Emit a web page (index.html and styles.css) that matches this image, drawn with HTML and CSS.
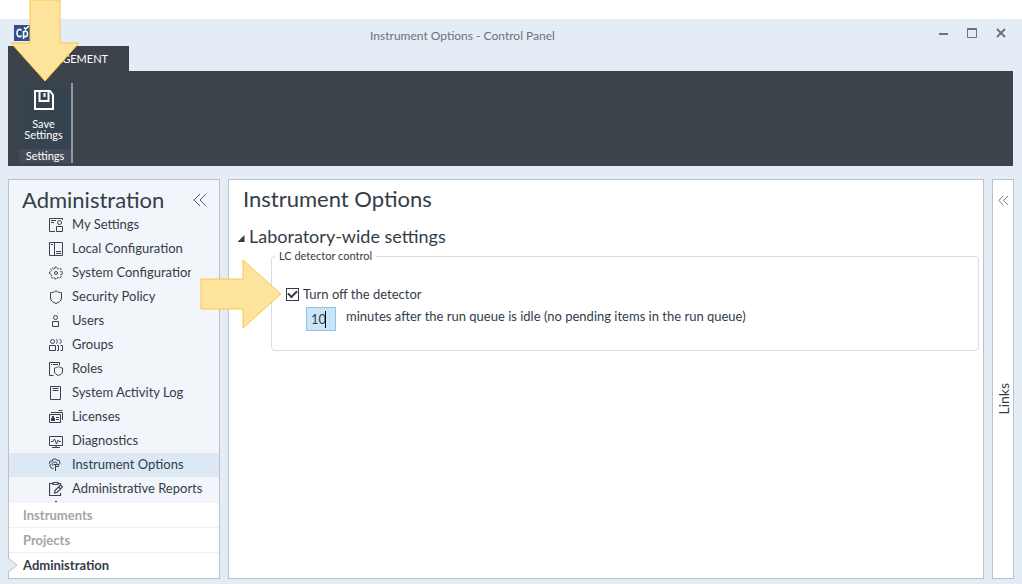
FILE: index.html
```html
<!DOCTYPE html>
<html lang="en">
<head>
  <meta charset="UTF-8" />
  <meta name="viewport" content="width=device-width, initial-scale=1.0" />
  <title>Instrument Options - Control Panel</title>
  <link rel="stylesheet" href="styles.css">
</head>
<body>

  <div class="window">

    <!-- TITLE BAR -->
    <header class="titlebar">
      <svg class="logo" viewBox="0 0 17 16" aria-hidden="true">
        <rect width="17" height="16" fill="#2f4f86"/>
        <path d="M7.500 5.500C6 3.500 3 4 3 8s3 4.500 4.500 2.500M9.500 14V6M9.500 7c3-2 4 0 4 2s-1 3.500-4 2M10 2.500l1.500 1.500L15 1" fill="none" stroke="#fff" stroke-width="1.600"/>
      </svg>
      <h1>Instrument Options - Control Panel</h1>
      <div class="window-buttons">
        <button type="button" aria-label="Minimize">
          <svg viewBox="0 0 12 12"><path d="M2 7h9" stroke-width="2"/></svg>
        </button>
        <button type="button" aria-label="Maximize">
          <svg viewBox="0 0 12 12"><path d="M1.500 1.500h9v9h-9zM1 2.500h10"/></svg>
        </button>
        <button type="button" aria-label="Close">
          <svg viewBox="0 0 12 12"><path d="M2 2l8 8M10 2l-8 8" stroke-width="2"/></svg>
        </button>
      </div>
    </header>

    <!-- RIBBON -->
    <button type="button" class="ribbon-tab">MANAGEMENT</button>
    <div class="ribbon">
      <div class="ribbon-group">
        <button type="button" class="save-btn">
          <svg viewBox="0 0 22 22" aria-hidden="true">
            <path d="M2 2h15l3 4v14H2zM6.500 2v10h9V2M11.500 4v4" fill="none" stroke="#fff" stroke-width="2"/>
          </svg>
          <span>Save<br>Settings</span>
        </button>
        <div class="group-name">Settings</div>
      </div>
    </div>

    <!-- WORKSPACE -->
    <div class="workspace">
      <aside class="sidebar">
        <div class="sidebar-head">
          <h2>Administration</h2>
          <button type="button" class="collapse" aria-label="Collapse">
            <svg viewBox="0 0 14 14"><path d="M7 1L1 7l6 6M13 1L7 7l6 6"/></svg>
          </button>
        </div>

        <nav class="menu">
          <a href="#">
            <svg viewBox="0 0 14 14"><path d="M6 13.500H.5V.5h13V2M2 2.500h5M2 4.500h3M7.500 8.500h6v5h-6z"/><circle cx="10.500" cy="4.500" r="2"/></svg>
            My Settings
          </a>
          <a href="#">
            <svg viewBox="0 0 14 14"><path d="M.5.5h13v13H.5zM5.500.5v13M2 2.500h2M7 9.500h5M7 11.500h5"/></svg>
            Local Configuration
          </a>
          <a href="#">
            <svg viewBox="0 0 14 14"><path d="M5.700 2.500L6 1h2l.3 1.500 1 .5 1.500-1L12.300 3.300l-.8 1.500.4 1L13.500 6v2l-1.600.3-.4 1 .8 1.500-1.500 1.500-1.500-1-1 .4L8 13H6l-.3-1.300-1-.4-1.500 1-1.500-1.500.8-1.500-.4-1L.5 8V6l1.600-.3.4-1L1.700 3.300 3.200 2l1.500 1z" stroke-dasharray="3 1"/><circle cx="7" cy="7" r="1.500"/></svg>
            <span class="clipped">System Configuration</span>
          </a>
          <a href="#">
            <svg viewBox="0 0 14 14"><path d="M7 .7C5 2.500 3 2.500 1.500 2.500V8c0 3 3 4.500 5.500 5.500 2.500-1 5.500-2.500 5.500-5.500V2.500C11 2.500 9 2.500 7 .7z"/></svg>
            Security Policy
          </a>
          <a href="#">
            <svg viewBox="0 0 14 14"><circle cx="6.500" cy="3.500" r="2"/><path d="M3.500 7.500h6v5h-6z"/></svg>
            Users
          </a>
          <a href="#">
            <svg viewBox="0 0 14 14"><circle cx="3.500" cy="3.500" r="2"/><path d="M.5 7.500h6v5h-6zM7 1.500c2 .5 2 3.500 0 4M10.500 1.500c2.500.5 2.500 3.500 0 4M8 7.500h1.500v5H8M11.500 7.500h2v5h-2"/></svg>
            Groups
          </a>
          <a href="#">
            <svg viewBox="0 0 14 14"><path d="M4.500 13.500h-4V.5h10v3M2 2.500h1M4 2.500h5M9.500 4.500c-1.500 1.500-3 1-4 1.500v4c.5 2 2 2.700 4 3.500 2-.8 3.500-1.500 4-3.500V6c-1-.5-2.500 0-4-1.500z"/></svg>
            Roles
          </a>
          <a href="#">
            <svg viewBox="0 0 14 14"><path d="M1.500.5h10v13h-10zM3.500 2.500h6M3.500 4.500h6"/></svg>
            System Activity Log
          </a>
          <a href="#">
            <svg viewBox="0 0 14 14"><path d="M.5 4.500h11v8H.5zM2 2.500h11.500V10M9.500.5h4M7 7.500h3M7 9.500h3"/><path d="M3 6h2v2h1v3H2V8h1z" fill="#3c424a" stroke="none"/></svg>
            Licenses
          </a>
          <a href="#">
            <svg viewBox="0 0 14 14"><path d="M.5 2.500h13v9H.5zM2 7.500h2L5.500 5l2 5L9 6l1 1.500h2M7 11v2M3 13.500h8"/></svg>
            Diagnostics
          </a>
          <a href="#" class="active">
            <svg viewBox="0 0 14 14"><path d="M4.500 10.500L2 10 .8 8l.9-1.500L0 5.500 1.300 3l1.900.3L4 1h3l1 1.500 2-.3L11 5l-.5 1.500M4 8C2.500 6.500 3 4 5.500 4S8 5.500 8 6M6.500 6.500V13M4.500 6.500h5v2h-3"/></svg>
            Instrument Options
          </a>
          <a href="#">
            <svg viewBox="0 0 14 14"><path d="M4 1.500H.5v12h11V11M9.500 1.500h2V3M4 .5h5v2H4zM5.500 11l.5-2.500 5.500-5.500 2 2L8 10.500zM9.500 5l2 2" stroke-width="1.200"/></svg>
            Administrative Reports
          </a>
        </nav>

        <nav class="sections">
          <a href="#">Instruments</a>
          <a href="#">Projects</a>
          <a href="#" class="current">Administration
            <svg class="notch" viewBox="0 0 10 16" aria-hidden="true"><path d="M0 1l9 7-9 7" fill="#e4ecf4" stroke="#bcc1c8"/></svg>
          </a>
        </nav>
      </aside>

      <main class="content">
        <h2>Instrument Options</h2>
        <h3>
          <svg viewBox="0 0 8 8" aria-hidden="true"><path d="M7.500 1v7H.5z" fill="#333b45"/></svg>
          Laboratory-wide settings
        </h3>
        <fieldset>
          <legend>LC detector control</legend>
          <label class="check-row">
            <input type="checkbox" checked>
            Turn off the detector
          </label>
          <div class="minutes-row">
            <div class="minutes-box">
              <input type="text" id="minutes" value="10">
              <span class="caret"></span>
            </div>
            <label for="minutes">minutes after the run queue is idle (no pending items in the run queue)</label>
          </div>
        </fieldset>
      </main>

      <aside class="links">
        <button type="button" class="collapse" aria-label="Expand links">
          <svg viewBox="0 0 14 14"><path d="M7 1L1 7l6 6M13 1L7 7l6 6"/></svg>
        </button>
        <span>Links</span>
      </aside>
    </div>
  </div>

  <!-- Callout arrows over the window -->
  <svg class="arrow arrow-save" viewBox="0 0 70 83" aria-hidden="true">
    <path d="M20 0h30v43h19L35 81 1 43h19z"/>
  </svg>
  <svg class="arrow arrow-check" viewBox="0 0 83 70" aria-hidden="true">
    <path d="M1 20h42V1l38 34-38 34V50H1z"/>
  </svg>

</body>
</html>
```
FILE: styles.css
```css
* {
  box-sizing: border-box;
  margin: 0;
  padding: 0;
}

body {
  position: relative;
  min-height: 100vh;
  padding-top: 19px;
  display: flex;
  flex-direction: column;
  font-family: Lato, "Liberation Sans", sans-serif;
  font-size: 13px;
  color: #333d49;
  background: #fff;
}

button {
  border: none;
  background: none;
  font: inherit;
  color: inherit;
  cursor: pointer;
}

a {
  color: inherit;
  text-decoration: none;
}

h1, h2, h3 {
  font-weight: 400;
}

.window {
  flex: 1;
  display: flex;
  flex-direction: column;
  padding: 0 8px 5px;
  background: #e4edf5;
}

/* Title bar */
.titlebar {
  display: grid;
  grid-template-columns: 1fr auto 1fr;
  align-items: center;
  height: 27px;
  padding: 0 7px 0 6px;
}

.logo {
  width: 17px;
  height: 16px;
}

.titlebar h1 {
  padding-top: 6px;
  margin-right: 96px;
  font-size: 12px;
  color: #6a737c;
}

.window-buttons {
  display: flex;
  justify-content: flex-end;
  gap: 17px;
}

.window-buttons button,
.window-buttons svg {
  display: block;
  width: 12px;
  height: 12px;
}

.window-buttons svg {
  fill: none;
  stroke: #6f7276;
}

/* Ribbon */
.ribbon-tab {
  align-self: flex-start;
  width: 121px;
  height: 25px;
  font-size: 11px;
  color: #fff;
  background: #3d434b;
}

.ribbon {
  display: flex;
  height: 95px;
  margin-right: 1px;
  padding: 12px 11px 3px;
  background: #3d434b;
}

.ribbon-group {
  display: flex;
  flex-direction: column;
  justify-content: space-between;
  width: 54px;
  border-right: 2px solid #8e9aa7;
  font-size: 11px;
  color: #fff;
  background: #37434e;
}

.save-btn {
  padding: 6px 3px 0 0;
  line-height: 11px;
}

.save-btn svg {
  display: block;
  width: 22px;
  height: 22px;
  margin: 0 auto 7px;
}

.group-name {
  line-height: 14px;
  text-align: center;
  background: #434d5a;
}

/* Workspace */
.workspace {
  flex: 1;
  display: flex;
  gap: 8px;
  margin-top: 13px;
}

.sidebar,
.content,
.links {
  border: 1px solid #bcc1c8;
  background: #fff;
}

.sidebar {
  display: flex;
  flex-direction: column;
  width: 212px;
  background: #f2f5fa;
}

.sidebar-head {
  display: flex;
  justify-content: space-between;
  align-items: center;
  height: 33px;
  padding: 6px 12px 0 13px;
}

h2 {
  font-size: 22px;
  line-height: 27px;
}

.collapse svg {
  display: block;
  width: 14px;
  height: 14px;
  fill: none;
  stroke: #4d5663;
}

.menu {
  flex: 1;
}

.menu a {
  display: flex;
  align-items: center;
  gap: 9px;
  height: 24px;
  padding: 0 0 2px 40px;
  white-space: nowrap;
}

.menu svg {
  width: 14px;
  height: 14px;
  margin-top: 2px;
  fill: none;
  stroke: #3c424a;
}

.menu .active {
  background: #dce9f5;
}

.clipped {
  width: 119px;
  overflow: hidden;
}

/* tip of the next icon, scrolled under the sections */
.menu::after {
  content: "";
  display: block;
  width: 2px;
  height: 1px;
  margin-left: 46px;
  background: #3c424a;
}

.sections a {
  position: relative;
  display: block;
  height: 25px;
  padding-left: 14px;
  border-bottom: 1px solid #eceff3;
  line-height: 24px;
  font-weight: 700;
  color: #a3a5a9;
  background: #fff;
}

.sections .current {
  border-bottom: none;
  color: #333d49;
}

.notch {
  position: absolute;
  left: -1px;
  top: 4px;
  width: 10px;
  height: 16px;
}

/* Content */
.content {
  flex: 1;
  padding: 5px 4px 0 8px;
}

.content h2 {
  padding-left: 6px;
}

.content h3 {
  display: flex;
  align-items: center;
  gap: 4px;
  margin-top: 11px;
  font-size: 18px;
  line-height: 26px;
}

.content h3 svg {
  width: 8px;
  height: 8px;
  margin-top: 3px;
}

fieldset {
  height: 102px;
  margin-left: 34px;
  padding: 22px 14px 0;
  border: 1px solid #d3dde6;
  border-radius: 4px;
}

legend {
  margin-left: -11px;
  padding: 0 4px;
  font-size: 11px;
  line-height: 14px;
}

.check-row {
  display: flex;
  align-items: center;
  gap: 4px;
  line-height: 18px;
}

.check-row input {
  appearance: none;
  display: grid;
  place-items: center;
  width: 13px;
  height: 13px;
  border: 1px solid #333b45;
  background: #fff;
}

.check-row input:checked::before {
  content: "";
  width: 7px;
  height: 4px;
  margin-top: -2px;
  border: solid #333b45;
  border-width: 0 0 2px 2px;
  transform: rotate(-45deg);
}

.minutes-row {
  display: flex;
  gap: 10px;
  margin-top: 4px;
  padding-left: 20px;
}

.minutes-row label {
  line-height: 18px;
}

.minutes-box {
  position: relative;
}

.minutes-box input {
  display: block;
  width: 30px;
  height: 24px;
  padding-left: 4px;
  border: 1px solid #90c4ea;
  font: inherit;
  color: inherit;
  background: #cbe5f8;
}

.caret {
  position: absolute;
  left: 19px;
  top: 4px;
  width: 1px;
  height: 17px;
  background: #000;
}

/* Links strip */
.links {
  display: flex;
  flex-direction: column;
  align-items: center;
  width: 22px;
  padding-top: 15px;
}

.links .collapse svg {
  width: 11px;
  height: 11px;
}

.links span {
  margin: auto 0;
  padding-bottom: 14px;
  font-size: 14px;
  writing-mode: vertical-rl;
  transform: rotate(180deg);
}

/* Callout arrows */
.arrow {
  position: absolute;
  fill: #fde39b;
  stroke: #fcc64f;
}

.arrow-save {
  left: 10px;
  top: 0;
  width: 70px;
  height: 83px;
}

.arrow-check {
  left: 200px;
  top: 259px;
  width: 83px;
  height: 70px;
}
```
